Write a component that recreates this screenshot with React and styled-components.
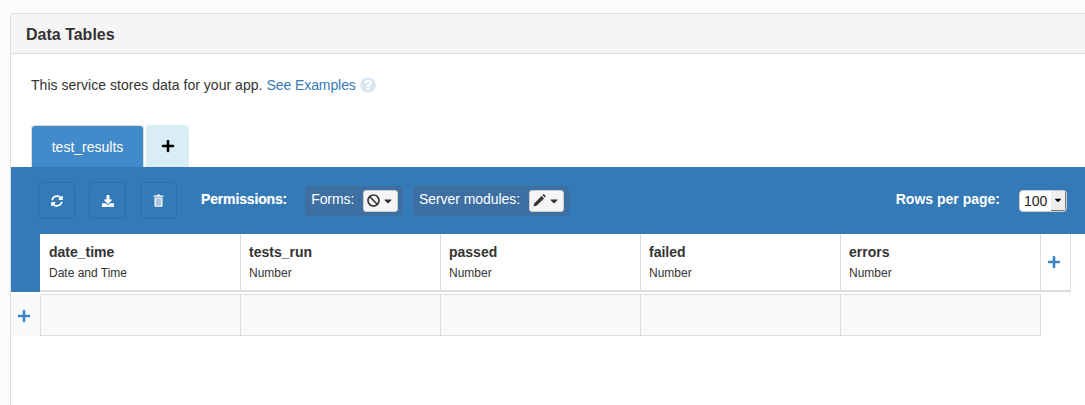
import React from 'react'
import styled, { createGlobalStyle } from 'styled-components'
import { FaSyncAlt, FaDownload, FaBan, FaPlus, FaQuestionCircle, FaCaretDown } from 'react-icons/fa'

const GlobalStyle = createGlobalStyle`
  html, body {
    margin: 0;
    height: 405px;
    overflow: hidden;
    background: #fcfcfc;
    font-family: "Liberation Sans", Arial, sans-serif;
    color: #333;
    font-size: 14px;
  }
`

const Page = styled.div`
  padding: 13px 0 0 10px;
  height: 392px;
`

const Panel = styled.div`
  height: 100%;
  background: #fff;
  border: 1px solid #ddd;
  border-right: 0;
  border-bottom: 0;
  border-radius: 4px 0 0 0;
`

const PanelHeading = styled.div`
  height: 39px;
  line-height: 41px;
  padding-left: 15px;
  background: #f5f5f5;
  border-bottom: 1px solid #ddd;
  font-size: 16px;
  font-weight: bold;
  color: #333;
  border-radius: 3px 0 0 0;
`

const Intro = styled.div`
  display: flex;
  align-items: center;
  height: 20px;
  margin: 21px 0 30px 20px;
  color: #333;
  letter-spacing: 0.03px;
`

const ExampleLink = styled.a`
  color: #337ab7;
  margin-left: 4px;
  letter-spacing: -0.08px;
`

const HelpIcon = styled(FaQuestionCircle)`
  color: #d9e6f2;
  font-size: 16px;
  margin-left: 4px;
`

const Tabs = styled.div`
  display: flex;
  gap: 2px;
  padding-left: 20px;
  height: 42px;
`

const Tab = styled.div`
  display: flex;
  align-items: center;
  justify-content: center;
  width: ${p => p.$width}px;
  color: #fff;
  background: #428bca;
  border: 1px solid #ddd;
  border-bottom: 0;
  border-radius: 4px 4px 0 0;
  box-sizing: border-box;
`

const AddTab = styled(Tab)`
  background: #d9edf7;
  border: 0;
  color: #000;
  font-size: 14px;
`

const Toolbar = styled.div`
  display: flex;
  align-items: center;
  height: 67px;
  padding: 0 18px 0 27px;
  background: #337ab7;
  color: #fff;
  box-sizing: border-box;
`

const IconButton = styled.div`
  display: flex;
  align-items: center;
  justify-content: center;
  width: 37px;
  height: 37px;
  margin-right: 14px;
  box-sizing: border-box;
  border: 1px solid #2e6da4;
  border-radius: 4px;
  color: #fff;
  font-size: 12px;
`

const ToolLabel = styled.div`
  font-weight: bold;
  margin: 0 18px 0 10px;
  padding-bottom: 4px;
  letter-spacing: -0.15px;
  text-shadow: 0 0 1px rgba(255, 255, 255, 0.4);
`

const PermissionGroup = styled.div`
  display: flex;
  align-items: center;
  gap: 9px;
  height: 30px;
  padding: 0 5px 0 6px;
  margin-right: 9.5px;
  background: #3d6fa3;
  border-radius: 4px;
`

const GroupLabel = styled.span`
  padding-bottom: 4px;
  letter-spacing: -0.05px;
`

const PermissionSelect = styled.div`
  display: flex;
  align-items: center;
  justify-content: center;
  gap: 2px;
  width: 35px;
  height: 22px;
  box-sizing: border-box;
  background: #f5f5f5;
  border: 1px solid #ccc;
  border-radius: 3px;
  color: #333;
  font-size: 13px;
`

const SmallCaret = styled(FaCaretDown)`
  font-size: 12px;
`

const Spacer = styled.div`
  flex: 1;
`

const RowsLabel = styled.b`
  padding-bottom: 4px;
`

const RowsSelect = styled.div`
  display: flex;
  align-items: center;
  justify-content: space-between;
  width: 48px;
  height: 22px;
  margin-left: 19px;
  box-sizing: border-box;
  padding-left: 4px;
  background: #fff;
  border: 1px solid #ccc;
  border-radius: 4px;
  color: #222;
  overflow: hidden;
`

const RowsArrow = styled.div`
  display: flex;
  align-items: center;
  justify-content: center;
  width: 15px;
  height: 100%;
  background: #eee;
  border-right: 1px solid #777;
  border-bottom: 1px solid #777;
  box-sizing: border-box;
  color: #000;
  font-size: 10px;
`

const HeaderBand = styled.div`
  display: flex;
  background: #337ab7;
  padding-left: 29px;
`

const HeaderRow = styled.div`
  display: flex;
  flex: 1;
  height: 58px;
  background: #fff;
  box-sizing: border-box;
  border-bottom: 2px solid #ddd;
`

const HeaderCell = styled.div`
  width: 200px;
  box-sizing: border-box;
  padding: 10px 0 0 8px;
  border-right: 1px solid #ddd;

  &:first-child {
    width: 201px;
    padding-left: 9px;
  }
`

const ColumnName = styled.div`
  font-weight: bold;
  line-height: 17px;
  color: #333;
`

const ColumnType = styled.div`
  font-size: 12px;
  line-height: 14px;
  margin-top: 5px;
  color: #333;
`

const AddColumn = styled.div`
  display: flex;
  align-items: center;
  justify-content: center;
  width: 30px;
  box-sizing: border-box;
  border-right: 1px solid #ddd;
  color: #3f85c6;
  font-size: 14px;
  padding: 0 3px 1px 0;
`

const BlankEnd = styled.div`
  flex: 1;
  background: #fff;
`

const DataRow = styled.div`
  display: flex;
  margin-top: 2px;
`

const AddRow = styled.div`
  display: flex;
  align-items: center;
  justify-content: center;
  width: 29px;
  height: 42px;
  padding: 2px 3px 0 0;
  box-sizing: border-box;
  color: #3f85c6;
  font-size: 14px;
  background: #fafafa;
`

const DataCell = styled.div`
  width: 200px;
  height: 42px;
  box-sizing: border-box;
  background: #f9f9f9;
  border: 1px solid #ddd;
  border-left: 0;

  &:nth-child(2) {
    width: 201px;
    border-left: 1px solid #ddd;
  }
`

const columns = [
  { name: 'date_time', type: 'Date and Time' },
  { name: 'tests_run', type: 'Number' },
  { name: 'passed', type: 'Number' },
  { name: 'failed', type: 'Number' },
  { name: 'errors', type: 'Number' }
]

const TrashIcon = () => (
  <svg width="11" height="13" viewBox="0 0 11 13">
    <path d="M3.5 1.5 L4.2 0.5 H6.8 L7.5 1.5 H10.5 V2.8 H0.5 V1.5 Z" fill="#fff" />
    <path d="M1.5 3.5 H9.5 V12 Q9.5 12.8 8.7 12.8 H2.3 Q1.5 12.8 1.5 12 Z" fill="#fff" />
    <path d="M2.7 4.5 H8.3 V11.7 H2.7 Z" fill="#a9c6e0" />
  </svg>
)

const PencilIcon = () => (
  <svg width="13" height="13" viewBox="0 0 13 13">
    <path d="M0.5 12.5 L1.4 9.2 L8.6 2 L11 4.4 L3.8 11.6 Z" fill="#333" />
    <path d="M9.4 1.2 L10.2 0.5 Q10.7 0.2 11.2 0.6 L12.4 1.8 Q12.8 2.3 12.4 2.8 L11.8 3.6 Z" fill="#333" />
  </svg>
)

export default function App() {
  return (
    <Page>
      <GlobalStyle />
      <Panel>
        <PanelHeading>Data Tables</PanelHeading>
        <Intro>
          This service stores data for your app.
          <ExampleLink>See Examples</ExampleLink>
          <HelpIcon />
        </Intro>
        <Tabs>
          <Tab $width={113}>test_results</Tab>
          <AddTab $width={43}><FaPlus /></AddTab>
        </Tabs>
        <Toolbar>
          <IconButton><FaSyncAlt /></IconButton>
          <IconButton><FaDownload /></IconButton>
          <IconButton><TrashIcon /></IconButton>
          <ToolLabel>Permissions:</ToolLabel>
          <PermissionGroup>
            <GroupLabel>Forms:</GroupLabel>
            <PermissionSelect><FaBan /><SmallCaret /></PermissionSelect>
          </PermissionGroup>
          <PermissionGroup>
            <GroupLabel>Server modules:</GroupLabel>
            <PermissionSelect><PencilIcon /><SmallCaret /></PermissionSelect>
          </PermissionGroup>
          <Spacer />
          <RowsLabel>Rows per page:</RowsLabel>
          <RowsSelect>
            100
            <RowsArrow><FaCaretDown /></RowsArrow>
          </RowsSelect>
        </Toolbar>
        <HeaderBand>
          <HeaderRow>
            {columns.map(col => (
              <HeaderCell key={col.name}>
                <ColumnName>{col.name}</ColumnName>
                <ColumnType>{col.type}</ColumnType>
              </HeaderCell>
            ))}
            <AddColumn><FaPlus /></AddColumn>
          </HeaderRow>
          <BlankEnd />
        </HeaderBand>
        <DataRow>
          <AddRow><FaPlus /></AddRow>
          {columns.map(col => <DataCell key={col.name} />)}
        </DataRow>
      </Panel>
    </Page>
  )
}
